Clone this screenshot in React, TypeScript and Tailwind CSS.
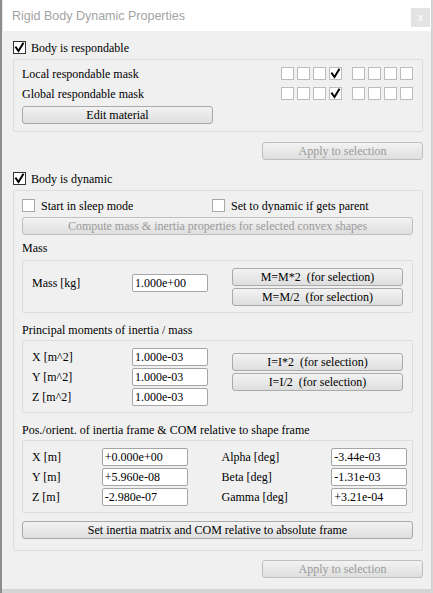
import { FC, ReactNode } from 'react';

const Check: FC = () => (
    <svg width="11" height="11" viewBox="0 0 11 11" className="block">
        <path d="M2 5.5 L4.5 9 L9 1.5" fill="none" stroke="#000" strokeWidth="2" strokeLinecap="square" />
    </svg>
);

const CheckBox: FC<{ checked?: boolean; light?: boolean }> = ({ checked, light }) => (
    <div
        className={ `w-[13px] h-[13px] shrink-0 bg-white border flex items-center justify-center ${ light ? 'border-[#bcbcbc]' : checked ? 'border-[#333333]' : 'border-[#a8a8a8]' }` }
    >
        { checked && <Check /> }
    </div>
);

const Btn: FC<{ children: ReactNode; disabled?: boolean; className?: string }> = ({ children, disabled, className }) => (
    <div
        className={ `h-[18px] flex items-center justify-center rounded-[3px] border bg-linear-to-b from-[#f3f3f3] to-[#dedede] text-[12px] leading-none whitespace-pre ${ disabled ? 'border-[#bfbfbf] text-[#9a9a9a]' : 'border-[#a9a9a9] text-black' } ${ className ?? '' }` }
    >
        { children }
    </div>
);

const Field: FC<{ value: string; className?: string }> = ({ value, className }) => (
    <div className={ `h-[18px] bg-white border border-[#a5a5a5] rounded-[2px] pl-[2px] flex items-center text-[12px] leading-none ${ className ?? '' }` }>
        { value }
    </div>
);

const Group: FC<{ children: ReactNode; className?: string }> = ({ children, className }) => (
    <div className={ `border border-[#dcdcdc] rounded-[2px] ${ className ?? '' }` }>{ children }</div>
);

const Label: FC<{ children: ReactNode }> = ({ children }) => (
    <div className="h-[18px] flex items-center text-[12px] leading-none">{ children }</div>
);

const MaskRow: FC<{ label: string }> = ({ label }) => (
    <div className="h-[13px] flex items-center justify-between">
        <span className="text-[12px] leading-none">{ label }</span>
        <div className="flex gap-[3px]">
            <CheckBox light />
            <CheckBox light />
            <CheckBox light />
            <CheckBox light checked />
            <div className="w-[4px]" />
            <CheckBox light />
            <CheckBox light />
            <CheckBox light />
            <CheckBox light />
        </div>
    </div>
);

export default function App()
{
    return (
        <div className="w-[433px] h-[593px] flex bg-[#d4d4d4] [font-family:'Liberation_Serif',serif] text-black">
            <div className="w-[2px] h-full bg-[#8c8c8c]" />
            <div className="w-[430px] h-[589px] flex flex-col bg-[#f0f0f0] border-r border-[#cfcfcf]">
                {/* Title bar */}
                <div className="h-[31px] bg-white flex items-center justify-between pl-[9px] pr-[1px] border-l border-[#e6e6e6]">
                    <span className="[font-family:'Liberation_Sans',sans-serif] text-[12.5px] text-[#a3a3a3] leading-none mt-[1px]">Rigid Body Dynamic Properties</span>
                    <div className="w-[19px] h-[19px] mt-[4px] bg-[#e3e3e3] flex items-center justify-center text-white text-[11px] [font-family:'Liberation_Sans',sans-serif] leading-none">x</div>
                </div>

                {/* Body */}
                <div className="flex flex-col pl-[11px] pr-[8px]">
                    <div className="mt-[10px] h-[13px] flex items-center gap-[5px]">
                        <CheckBox checked />
                        <span className="text-[12px] leading-none">Body is respondable</span>
                    </div>

                    <Group className="mt-[5px] pl-[8px] pr-[9px] pt-[7px] pb-[7px] flex flex-col">
                        <MaskRow label="Local respondable mask" />
                        <div className="mt-[7px]">
                            <MaskRow label="Global respondable mask" />
                        </div>
                        <Btn className="mt-[6px] w-[191px]">Edit material</Btn>
                    </Group>

                    <div className="mt-[10px] flex justify-end">
                        <Btn disabled className="w-[161px]">Apply to selection</Btn>
                    </div>

                    <div className="mt-[12px] h-[13px] flex items-center gap-[5px]">
                        <CheckBox checked />
                        <span className="text-[12px] leading-none">Body is dynamic</span>
                    </div>

                    <Group className="mt-[5px] pl-[8px] pr-[9px] pt-[8px] pb-[11px] flex flex-col">
                        <div className="h-[13px] flex items-center">
                            <div className="w-[190px] flex items-center gap-[6px]">
                                <CheckBox />
                                <span className="text-[12px] leading-none">Start in sleep mode</span>
                            </div>
                            <div className="flex items-center gap-[6px]">
                                <CheckBox />
                                <span className="text-[12px] leading-none">Set to dynamic if gets parent</span>
                            </div>
                        </div>
                        <Btn disabled className="mt-[5px]">Compute mass &amp; inertia properties for selected convex shapes</Btn>

                        <div className="mt-[5px] h-[16px] flex items-center text-[12px] leading-none">Mass</div>
                        <Group className="mt-[4px] pl-[9px] pr-[9px] pt-[7px] pb-[6px] flex">
                            <div className="w-[100px] mt-[6px]">
                                <Label>Mass [kg]</Label>
                            </div>
                            <Field value="1.000e+00" className="w-[76px] mt-[6px]" />
                            <div className="ml-[24px] w-[171px] flex flex-col gap-[2px]">
                                <Btn>M=M*2  (for selection)</Btn>
                                <Btn>M=M/2  (for selection)</Btn>
                            </div>
                        </Group>

                        <div className="mt-[9px] h-[16px] flex items-center text-[12px] leading-none">Principal moments of inertia / mass</div>
                        <Group className="mt-[2px] pl-[9px] pr-[9px] pt-[7px] pb-[6px] flex">
                            <div className="w-[100px] flex flex-col gap-[2px]">
                                <Label>X [m^2]</Label>
                                <Label>Y [m^2]</Label>
                                <Label>Z [m^2]</Label>
                            </div>
                            <div className="w-[76px] flex flex-col gap-[2px]">
                                <Field value="1.000e-03" />
                                <Field value="1.000e-03" />
                                <Field value="1.000e-03" />
                            </div>
                            <div className="ml-[24px] mt-[5px] w-[171px] flex flex-col gap-[2px]">
                                <Btn>I=I*2  (for selection)</Btn>
                                <Btn>I=I/2  (for selection)</Btn>
                            </div>
                        </Group>

                        <div className="mt-[9px] h-[16px] flex items-center text-[12px] leading-none">Pos./orient. of inertia frame &amp; COM relative to shape frame</div>
                        <Group className="mt-[2px] pl-[9px] pr-[5px] pt-[7px] pb-[6px] flex">
                            <div className="w-[70px] flex flex-col gap-[2px]">
                                <Label>X [m]</Label>
                                <Label>Y [m]</Label>
                                <Label>Z [m]</Label>
                            </div>
                            <div className="w-[86px] flex flex-col gap-[2px]">
                                <Field value="+0.000e+00" />
                                <Field value="+5.960e-08" />
                                <Field value="-2.980e-07" />
                            </div>
                            <div className="ml-[34px] w-[110px] flex flex-col gap-[2px]">
                                <Label>Alpha [deg]</Label>
                                <Label>Beta [deg]</Label>
                                <Label>Gamma [deg]</Label>
                            </div>
                            <div className="w-[76px] flex flex-col gap-[2px]">
                                <Field value="-3.44e-03" />
                                <Field value="-1.31e-03" />
                                <Field value="+3.21e-04" />
                            </div>
                        </Group>

                        <Btn className="mt-[8px]">Set inertia matrix and COM relative to absolute frame</Btn>
                    </Group>

                    <div className="mt-[9px] flex justify-end">
                        <Btn disabled className="w-[161px]">Apply to selection</Btn>
                    </div>
                </div>
            </div>
        </div>
    );
}
